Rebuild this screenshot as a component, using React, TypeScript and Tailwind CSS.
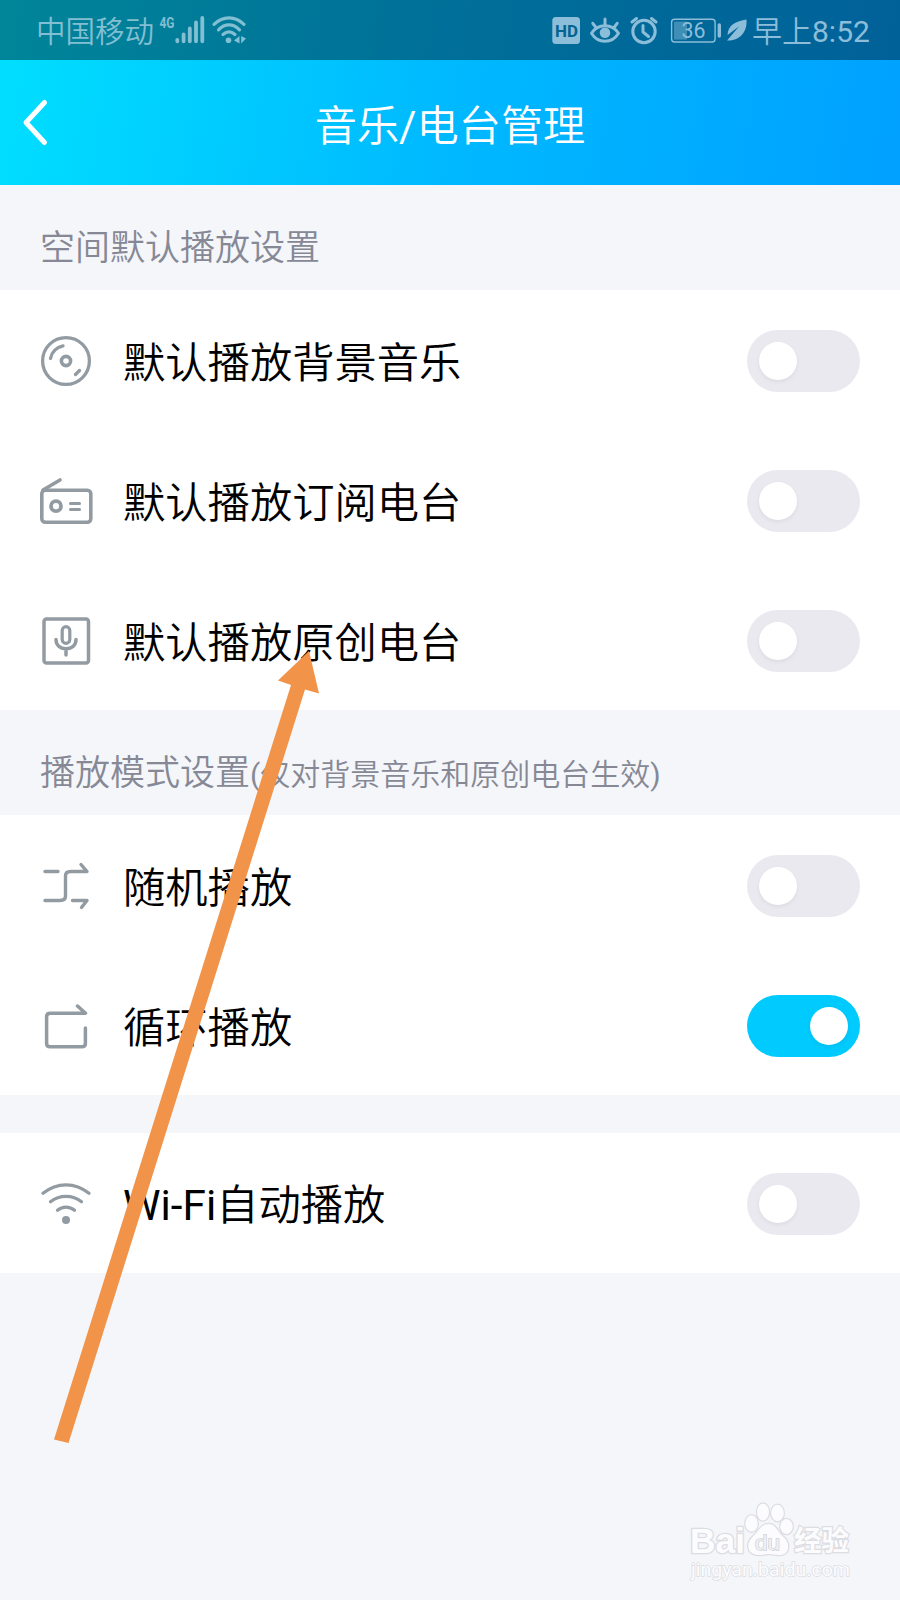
import { useState } from "react";
import type { ReactNode } from "react";

interface SettingItem {
  id: string;
  label: ReactNode;
  icon: ReactNode;
}

const DiscIcon = () => (
  <svg width="60" height="60" viewBox="0 0 60 60" fill="none" stroke="#939ba2" strokeWidth="3.3" strokeLinecap="round">
    <circle cx="30" cy="30" r="23.4" />
    <circle cx="30" cy="30" r="4.6" strokeWidth="3.6" />
    <path d="M14.5 27.5A16 16 0 0 1 27 14.8" />
    <path d="M39.5 43.5L43.5 39.5" />
  </svg>
);

const RadioIcon = () => (
  <svg width="60" height="60" viewBox="0 0 60 60" fill="none" stroke="#939ba2" strokeWidth="3.6" strokeLinecap="round" strokeLinejoin="round">
    <rect x="5.8" y="19.3" width="49" height="32" rx="3.5" />
    <path d="M7 19L24 9" />
    <circle cx="20" cy="35.2" r="5" strokeWidth="3.8" />
    <path d="M34.5 32.5H43.5M34.5 38.5H43.5" strokeWidth="3.1" />
  </svg>
);

const MicIcon = () => (
  <svg width="60" height="60" viewBox="0 0 60 60" fill="none" stroke="#939ba2" strokeWidth="3.5" strokeLinecap="round" strokeLinejoin="round">
    <rect x="8" y="8" width="44.5" height="44" rx="2.5" />
    <rect x="26.2" y="15.7" width="7.6" height="16.6" rx="3.8" strokeWidth="3.2" />
    <path d="M20 28.5C20 34 24 37.8 30 37.8S40 34 40 28.5M30 38V44" />
  </svg>
);

const ShuffleIcon = () => (
  <svg width="60" height="60" viewBox="0 0 60 60" fill="none" stroke="#939ba2" strokeWidth="3.4" strokeLinecap="round" strokeLinejoin="round">
    <path d="M9 15.5H22M9 44.5H24C27.5 44.5 29.5 43 29.5 40V20C29.5 17 31.5 15.5 34.5 15.5H51L45 8.5" />
    <path d="M36.5 44.5H51L45.5 51.5" />
  </svg>
);

const LoopIcon = () => (
  <svg width="60" height="60" viewBox="0 0 60 60" fill="none" stroke="#939ba2" strokeWidth="3.5" strokeLinecap="round" strokeLinejoin="round">
    <path d="M41.5 10L49.5 17.2H14.2C12 17.2 10.6 18.6 10.6 20.8V47.2C10.6 49.4 12 50.8 14.2 50.8H45.8C48 50.8 49.4 49.4 49.4 47.2V32" />
  </svg>
);

const WifiIcon = () => (
  <svg width="60" height="60" viewBox="0 0 60 60" fill="none" stroke="#939ba2" strokeWidth="3.3" strokeLinecap="round">
    <path d="M7 19.3C21 8 39 8 53 19.3" />
    <path d="M14.5 27.8C23.5 20.5 36.5 20.5 45.5 27.8" />
    <path d="M21.5 36.2C26.5 32 33.5 32 38.5 36.2" />
    <circle cx="30" cy="46" r="4" fill="#939ba2" stroke="none" />
  </svg>
);

const spaceItems: SettingItem[] = [
  { id: "bgm", label: "默认播放背景音乐", icon: <DiscIcon /> },
  { id: "subscribed", label: "默认播放订阅电台", icon: <RadioIcon /> },
  { id: "original", label: "默认播放原创电台", icon: <MicIcon /> },
];

const modeItems: SettingItem[] = [
  { id: "shuffle", label: "随机播放", icon: <ShuffleIcon /> },
  { id: "loop", label: "循环播放", icon: <LoopIcon /> },
];

const wifiItems: SettingItem[] = [
  { id: "wifi", label: <><span className="font-normal">Wi-Fi</span>自动播放</>, icon: <WifiIcon /> },
];

function StatusBar() {
  return (
    <div className="flex h-[60px] items-center bg-black/40 pl-[36px] pr-[30px] text-[#82bfd3]">
      <span className="pt-[5px] text-[29.5px] leading-[55px]">中国移动</span>
      <svg className="ml-[5px] shrink-0" width="92" height="60" viewBox="0 0 92 60" fill="none" stroke="currentColor" strokeLinecap="round">
        <text x="0.5" y="28" fontSize="15.5" fontWeight="700" fill="currentColor" stroke="none" textLength="15" lengthAdjust="spacingAndGlyphs">4G</text>
        <path d="M18.3 39.8V41.3M24.6 34.5V41.3M30.8 28.5V41.3M37 22.5V41.3M43.3 18V41.3" strokeWidth="3.8" />
        <path d="M55 24.3C64 15.7 76 15.7 85 24.3M59.5 29.8C66 23.3 74 23.3 80.5 29.8M64 34.5C68 31 72 31 76 34.5" strokeWidth="3.2" />
        <circle cx="69.5" cy="40.2" r="2.8" fill="currentColor" stroke="none" />
        <path d="M80.5 36V43.5L75 40.6ZM82.2 36V43.5L87 38.5Z" fill="currentColor" stroke="none" />
      </svg>
      <div className="ml-auto flex items-center text-[#8cbdd9]">
        <svg width="202" height="60" viewBox="0 0 202 60" fill="none" stroke="currentColor" strokeLinecap="round" strokeLinejoin="round">
          <rect x="4.3" y="17" width="27.7" height="27" rx="3.5" fill="currentColor" stroke="none" />
          <text x="7" y="36.5" fontSize="17" fontWeight="700" fill="#03638f" stroke="none" textLength="23" lengthAdjust="spacingAndGlyphs">HD</text>
          <path d="M43.5 33.3C50 23.3 64 23.3 70.5 33.3C64 44 50 44 43.5 33.3Z" strokeWidth="3" />
          <circle cx="57" cy="32.8" r="5.3" fill="currentColor" stroke="none" />
          <path d="M57 19V25M44.8 23.3L48 27.5M69.2 23.3L66 27.5" strokeWidth="3" />
          <circle cx="96" cy="31.5" r="11.2" strokeWidth="3" />
          <path d="M95 25.5V32L100.5 36.5M84 22L88.5 18.5M103.5 18.5L108 22" strokeWidth="3" />
          <rect x="123.6" y="19.2" width="43.5" height="22.8" rx="3" strokeWidth="1.4" />
          <rect x="126" y="21.6" width="13" height="18" fill="currentColor" stroke="none" opacity=".45" />
          <text x="133.5" y="38" fontSize="22.5" fontWeight="400" fill="currentColor" stroke="none" textLength="24" lengthAdjust="spacingAndGlyphs">36</text>
          <path d="M171.3 25V36" strokeWidth="3.4" />
          <path d="M198.5 19.5C188 21.5 180 24.5 179.5 35L191 26.5L179 40.5C190 41 199.5 34 198.5 19.5Z" fill="currentColor" stroke="none" />
        </svg>
        <span className="ml-[2px] w-[118px] pt-[4px] text-[30px] leading-[56px] whitespace-nowrap">
          早上<span className="font-normal">8:52</span>
        </span>
      </div>
    </div>
  );
}

function Toggle({ on, onChange }: { on: boolean; onChange: () => void }) {
  return (
    <button
      type="button"
      role="switch"
      aria-checked={on}
      onClick={onChange}
      className={`mt-[2px] flex h-[62px] w-[113px] items-center rounded-full px-[12px] ${on ? "justify-end bg-[#00cafe]" : "justify-start bg-[#eae9f0]"}`}
    >
      <span className="size-[38px] rounded-full bg-white shadow-[0_2px_4px_rgba(0,0,0,0.06)]" />
    </button>
  );
}

export default function App() {
  const [enabled, setEnabled] = useState<Record<string, boolean>>({ loop: true });

  const toggle = (id: string) => setEnabled((prev) => ({ ...prev, [id]: !prev[id] }));

  const renderItems = (items: SettingItem[]) => (
    <div className="bg-white">
      {items.map((item) => (
        <div key={item.id} className="flex h-[140px] items-center pr-10 pl-9">
          <div className="mt-[2px] shrink-0">{item.icon}</div>
          <span className="ml-[27px] flex-1 pt-[7px] text-[42.3px] leading-[60px] text-black">{item.label}</span>
          <Toggle on={!!enabled[item.id]} onChange={() => toggle(item.id)} />
        </div>
      ))}
    </div>
  );

  return (
    <div className="relative h-[1600px] w-[900px] overflow-hidden bg-[#f4f6fa] font-[Roboto,'Noto_Sans_CJK_SC',sans-serif] [font-weight:350]">
      <header className="bg-linear-[98deg] from-[#00dfff] via-[#00b9ff] via-50% to-[#00a1ff]">
        <StatusBar />
        <div className="grid h-[125px] grid-cols-[100px_1fr_100px] items-center text-white">
          <svg width="60" height="60" viewBox="0 0 60 60" fill="none" stroke="currentColor" strokeWidth="5" strokeLinecap="round" strokeLinejoin="round">
            <path d="M44.5 9.5L26 29.5L44.5 49.5" />
          </svg>
          <h1 className="pt-[9px] text-center text-[42.2px] leading-[60px] [font-weight:350]">
            音乐<span className="font-normal">/</span>电台管理
          </h1>
        </div>
      </header>

      <h2 className="flex h-[105px] items-center pt-[24px] pl-10 text-[35px] text-[#868895] [font-weight:350]">空间默认播放设置</h2>
      {renderItems(spaceItems)}

      <h2 className="flex h-[105px] items-center pt-[24px] pl-10 text-[35px] text-[#868895] [font-weight:350]">
        <span>
          播放模式设置
          <span className="text-[30px]">
            <span className="font-normal">(</span>仅对背景音乐和原创电台生效<span className="font-normal">)</span>
          </span>
        </span>
      </h2>
      {renderItems(modeItems)}

      <div className="mt-[37.5px]">{renderItems(wifiItems)}</div>

      {/* pointer towards the original radio row */}
      <svg className="pointer-events-none absolute inset-0" width="900" height="1600" viewBox="0 0 900 1600">
        <path d="M309 651L319 693.5L305 689.5L68.5 1443L54 1439.5L291 685L278 680.5Z" fill="#f2934a" />
      </svg>

      <svg className="absolute right-0 bottom-0 font-['Liberation_Sans','Noto_Sans_CJK_SC',sans-serif]" width="240" height="120" viewBox="0 0 240 120" fill="#fcfcfe" stroke="#dcdde2" strokeWidth="1.4" paintOrder="stroke">
        <text x="30" y="73" fontSize="35" fontWeight="700" textLength="55" lengthAdjust="spacingAndGlyphs" strokeWidth="2.6">Bai</text>
        <g strokeWidth="2.4">
          <ellipse cx="91.5" cy="43.5" rx="6.2" ry="8.2" />
          <ellipse cx="103" cy="32" rx="6" ry="8.6" />
          <ellipse cx="117.5" cy="33" rx="6.3" ry="8.2" />
          <ellipse cx="126.5" cy="46.5" rx="6.2" ry="7.6" />
          <path d="M108.5 44C116 44 117 51 123 56.5C131 63 130 75 119 75C114 75 111 74 108.500 74C105 74 102 75 98 75C86 74 86 63 93 56.5C99 51 101 44 108.5 44Z" />
        </g>
        <text x="95" y="70" fontSize="21" fontWeight="400" textLength="25" lengthAdjust="spacingAndGlyphs" fill="#f0f1f5" stroke="#cfd0d6">du</text>
        <text x="134" y="71" fontSize="28" fontWeight="700" textLength="55" lengthAdjust="spacingAndGlyphs" strokeWidth="2.4">经验</text>
        <text x="31" y="95.5" fontSize="18.5" fontWeight="400" textLength="159" lengthAdjust="spacingAndGlyphs" className="font-[Roboto,sans-serif]">jingyan.baidu.com</text>
      </svg>
    </div>
  );
}
